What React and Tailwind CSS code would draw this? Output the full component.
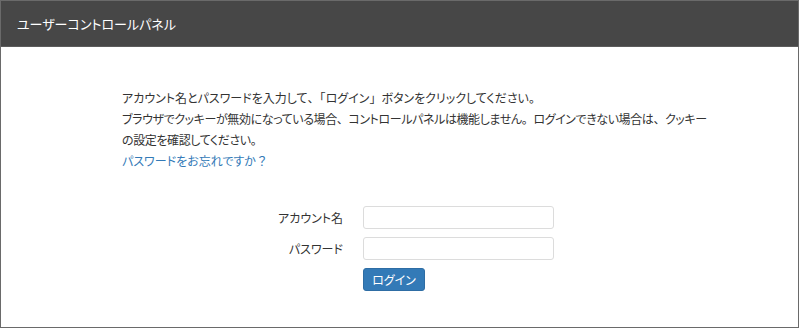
function P({ children }) {
  return <span style={{ fontFeatureSettings: 'normal' }}>{children}</span>;
}

export default function App() {
  const font = { fontFamily: '"Noto Sans CJK JP", "Noto Sans", sans-serif', fontFeatureSettings: '"palt"' };
  return (
    <div className="w-[800px] h-[329px] bg-white" style={font}>
      <div className="w-[799px] h-[328px] border border-[#6a6a6a] flex flex-col">
        <div className="h-[46px] bg-[#474747] border-b border-[#5c5c5c] flex items-center pl-[16px]">
          <span className="text-white text-[13px] leading-none">ユーザーコントロールパネル</span>
        </div>
        <div className="pl-[121px] pt-[40px] text-[12px] leading-[21px] text-[#333]">
          <p>
            アカウント名とパスワードを入力して<P>、「</P>ログイン<P>」</P>ボタンをクリックしてください。
          </p>
          <p className="tracking-[-0.4px]">
            ブラウザでクッキーが無効になっている場合<P>、</P>コントロールパネルは機能しません<P>。</P>ログインできない場合は<P>、</P>クッキー
            <br />
            の設定を確認してください。
          </p>
          <p className="text-[#337ab7]">
            パスワードをお忘れですか<P>？</P>
          </p>
        </div>
        <div className="mt-[35px] flex flex-col gap-[8px]">
          <div className="flex items-center">
            <label className="w-[342px] text-right text-[12px] text-[#333]">アカウント名</label>
            <input className="ml-[20px] w-[191px] h-[23px] border border-[#dcdcdc] rounded-[3px] outline-none" />
          </div>
          <div className="flex items-center">
            <label className="w-[342px] text-right text-[12px] text-[#333]">パスワード</label>
            <input type="password" className="ml-[20px] w-[191px] h-[23px] border border-[#dcdcdc] rounded-[3px] outline-none" />
          </div>
          <div className="flex">
            <button className="ml-[362px] w-[62px] h-[23px] bg-[#337ab7] border border-[#2e6da4] rounded-[3px] text-white text-[12px] leading-none">ログイン</button>
          </div>
        </div>
      </div>
    </div>
  );
}
